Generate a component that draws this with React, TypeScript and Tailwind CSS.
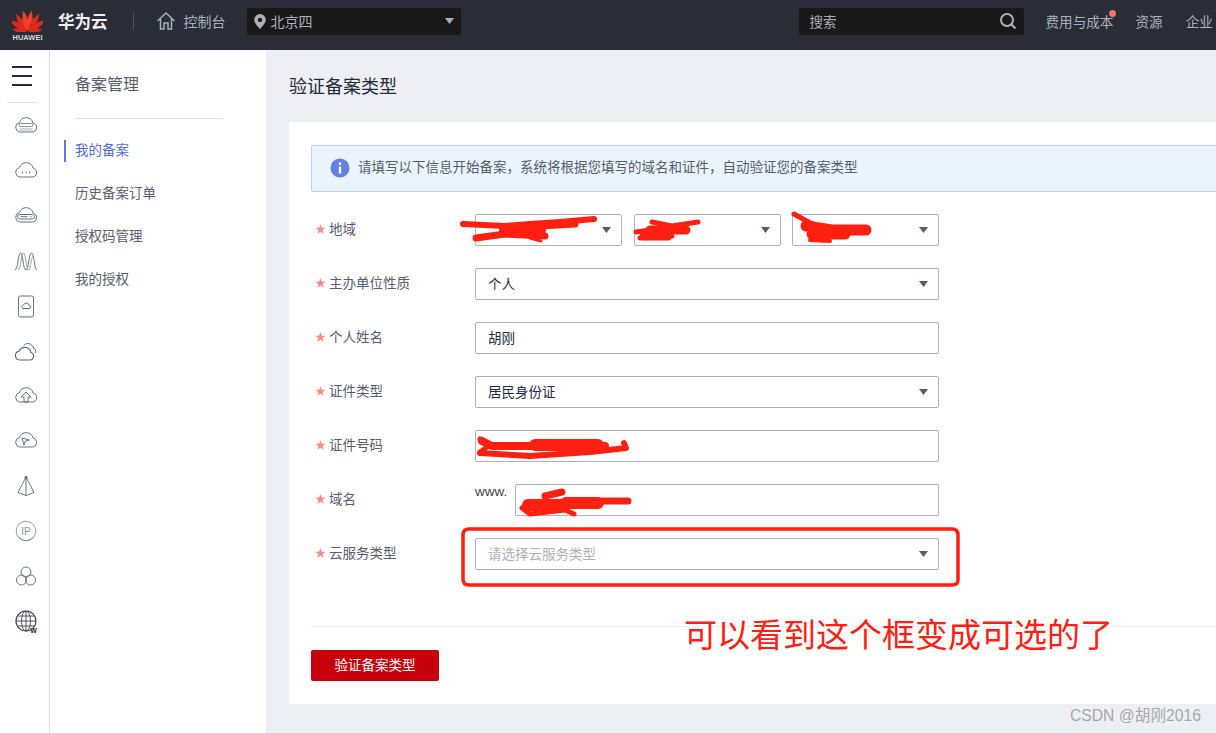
import React from 'react';

const CJK = '"Noto Sans CJK SC", "Liberation Sans", sans-serif';

const HuaweiLogo = () => (
  <svg width="31" height="23" viewBox="-16 -24 32 24" className="block">
    {[-80, -56, -33, -11, 11, 33, 56, 80].map((a, i) => (
      <path
        key={a}
        transform={`rotate(${a})`}
        d={i === 0 || i === 7 ? 'M0 -1C-2.800 -6 -3 -10 0 -16C3 -10 2.800 -6 0 -1Z' : 'M0 -1C-3.600 -8 -3.800 -14 0 -22.500C3.800 -14 3.600 -8 0 -1Z'}
        fill={i === 3 || i === 4 ? '#f0402a' : '#dd2a1c'}
      />
    ))}
  </svg>
);

const CaretDown = ({ color = '#575d6c' }: { color?: string }) => (
  <svg width="9" height="6" viewBox="0 0 9 6" className="block shrink-0">
    <path d="M0 0h9L4.500 6z" fill={color} />
  </svg>
);

const CLOUD = 'M5.500 18H18a4.500 4.500 0 0 0 1-8.900A7 7 0 0 0 5.500 8.600 4.800 4.800 0 0 0 5.500 18Z';

const RailIcon = ({ children }: { children: React.ReactNode }) => (
  <svg width="24" height="24" viewBox="0 0 24 24" fill="none" stroke="#5d6270" strokeWidth="0.9" className="block">
    {children}
  </svg>
);

const RAIL_ICONS: React.ReactNode[] = [
  <>
    <path d={CLOUD} />
    <rect x="5" y="9.500" width="14" height="3" rx="1.500" stroke="#7d818c" />
    <path d="M5.500 15.500h13" stroke="#d5d6da" strokeWidth="3" />
  </>,
  <>
    <path d={CLOUD} />
    <path d="M8 13.500h1M11.500 13.500h1M15 13.500h1" strokeWidth="1.400" />
  </>,
  <>
    <path d={CLOUD} />
    <rect x="3.500" y="10.500" width="17" height="4.500" rx="2.200" />
    <path d="M6.500 12.700h7M16 12.700h1.500" />
  </>,
  <>
    <path d="M1 21C4 21 4 4 6.500 4S9 21 12 21 14.500 4 17.500 4 20 21 23 21" />
    <path d="M4 21C7 21 7 4 9.500 4S12 21 14.500 21 17 4 20 8" stroke="#8d919b" />
  </>,
  <>
    <rect x="4.500" y="2" width="15" height="21" rx="1.800" />
    <path d="M9 14.500h6a1.500 1.500 0 0 0 .2-3 3 3 0 0 0-5.800-.3 1.700 1.700 0 0 0-.4 3.300Z" />
    <path d="M6 22.500h12" strokeWidth="1.400" stroke="#aeb1b8" />
  </>,
  <>
    <path d="M5.500 21H16a3.800 3.800 0 0 0 1-7.400 6.200 6.200 0 0 0-11.800-1.500A4.500 4.500 0 0 0 5.500 21Z" strokeWidth="1.100" />
    <path d="M9.500 6.500A5.500 5.500 0 0 1 14 4.500c3 0 5.500 2.500 5.500 5M19 8c2 1.300 3 3.500 2.500 6" />
  </>,
  <>
    <path d={CLOUD} />
    <path d="M12 8 7 13h3v5h4v-5h3Z" />
  </>,
  <>
    <path d={CLOUD} />
    <path d="M8 9 15.500 11l-4.500 1.500-1 3.500Z" />
  </>,
  <>
    <path d="M12 3 4 18.500l8 3 8-3ZM12 3v18.500" />
    <circle cx="12" cy="3.500" r="1.100" fill="#5d6270" />
  </>,
  <>
    <circle cx="12" cy="12" r="9.800" stroke="#8d919b" />
    <path d="M4.500 17.500A9 9 0 0 0 19.500 17.500" stroke="#8d919b" />
    <text x="12" y="15.800" textAnchor="middle" fontSize="10" fontFamily="Liberation Sans, sans-serif" fill="#8d919b" stroke="none">
      IP
    </text>
  </>,
  <>
    <circle cx="12" cy="8" r="5" />
    <circle cx="7.500" cy="16" r="5" />
    <circle cx="16.500" cy="16" r="5" />
  </>,
  <>
    <circle cx="12" cy="12" r="10" strokeWidth="1.200" stroke="#3d424e" />
    <ellipse cx="12" cy="12" rx="4.500" ry="10" stroke="#3d424e" />
    <path d="M12 2v20M2 12h20M4 7h16M4 17h16" stroke="#3d424e" />
    <text x="19.500" y="23.500" textAnchor="middle" fontSize="7" fontWeight="700" fontFamily="Liberation Sans, sans-serif" fill="#252b3a" stroke="none">
      W
    </text>
  </>,
];

const SUB_NAV = ['我的备案', '历史备案订单', '授权码管理', '我的授权'];

const Label = ({ text }: { text: string }) => (
  <div className="flex w-[164px] shrink-0 items-center pb-[4px] pl-[4px] text-[13.5px] text-[#575d6c]">
    <span className="mt-[1px] mr-[4px] w-[10px] text-[11px] leading-none text-[#f98b86]">★</span>
    {text}
  </div>
);

const Select = ({ value, placeholder, width }: { value?: string; placeholder?: string; width: string }) => (
  <div className={`flex h-8 items-center justify-between rounded-[2px] border border-[#adb0b8] pl-3 pr-[10px] text-[13.5px] ${width}`}>
    <span className={`pb-[2px] ${placeholder ? 'text-[#adb0b8]' : 'text-[#252b3a]'}`}>{value ?? placeholder}</span>
    <CaretDown />
  </div>
);

const TextInput = ({ value, width }: { value?: string; width: string }) => (
  <div className={`flex h-8 items-center rounded-[2px] border border-[#adb0b8] pb-[2px] pl-3 text-[13.5px] text-[#252b3a] ${width}`}>{value}</div>
);

const Row = ({ label, children }: { label: string; children: React.ReactNode }) => (
  <div className="flex h-8 items-center">
    <Label text={label} />
    {children}
  </div>
);

export default function App() {
  return (
    <div className="relative flex h-[733px] w-[1216px] flex-col overflow-hidden" style={{ fontFamily: CJK }}>
      {/* Top bar */}
      <header className="flex h-[50px] shrink-0 items-center bg-[#2a2d37] pb-[8px] text-[14px] text-[#a8b0bb]">
        <div className="ml-[12px] flex w-[31px] flex-col items-center pt-[8px]">
          <HuaweiLogo />
          <span className="mt-[1px] text-[7.5px] leading-[9px] font-bold text-[#d8dade]" style={{ fontFamily: '"Liberation Sans", sans-serif' }}>
            HUAWEI
          </span>
        </div>
        <span className="ml-[15px] text-[16.5px] font-bold text-[#eeeff1]">华为云</span>
        <div className="ml-[25px] h-[18px] w-px bg-[#4c505b]" />
        <svg width="20" height="20" viewBox="0 0 20 20" fill="none" stroke="#a8b0bb" strokeWidth="1.500" className="ml-[22px] block">
          <path d="M1.500 10 10 2l8.500 8M4.500 8v10h3.500v-6h4v6h3.500V8" />
        </svg>
        <span className="ml-[8px]">控制台</span>
        <div className="ml-[21px] flex h-[27px] w-[214px] items-center rounded-[2px] bg-[#191919] pr-[7px] pl-[7px]">
          <svg width="12" height="15" viewBox="0 0 12 15" className="block">
            <path fillRule="evenodd" d="M6 0a5.800 5.800 0 0 1 5.800 5.800C11.800 9.500 6 15 6 15S.2 9.500.2 5.800A5.800 5.800 0 0 1 6 0Zm0 3.700a2.200 2.200 0 1 0 0 4.400 2.200 2.200 0 0 0 0-4.400Z" fill="#a8b0bb" />
          </svg>
          <span className="ml-[5px] flex-1">北京四</span>
          <CaretDown color="#a8b0bb" />
        </div>
        <div className="ml-[338px] flex h-[27px] w-[225px] items-center justify-between rounded-[2px] bg-[#191919] pr-[7px] pl-[11px]">
          <span className="text-[13.5px]">搜索</span>
          <svg width="18" height="18" viewBox="0 0 18 18" fill="none" stroke="#a8b0bb" strokeWidth="2" className="block">
            <circle cx="8" cy="8" r="6" />
            <path d="m12.500 12.500 4 4" />
          </svg>
        </div>
        <div className="relative ml-[22px] text-[13.6px]">
          费用与成本
          <span className="absolute -top-[1px] -right-[3px] h-[7px] w-[7px] rounded-full bg-[#f66f6a]" />
        </div>
        <span className="ml-[22px] text-[13.6px]">资源</span>
        <span className="ml-[23px] text-[13.6px] whitespace-nowrap">企业</span>
      </header>

      <div className="flex min-h-0 flex-1">
        {/* Icon rail */}
        <aside className="flex w-[50px] shrink-0 flex-col border-r border-[#dfe1e6] bg-white">
          <div className="ml-[12px] mt-[16px] flex w-[20px] flex-col gap-[7px]">
            <div className="h-[2px] bg-[#252b3a]" />
            <div className="h-[2px] bg-[#252b3a]" />
            <div className="h-[2px] bg-[#252b3a]" />
          </div>
          <div className="ml-[7px] mt-[16px] h-px w-[31px] bg-[#dfe1e6]" />
          <div className="flex flex-col">
            {RAIL_ICONS.map((icon, i) => (
              <div key={i} className="flex h-[45px] items-center pl-[14px]">
                <RailIcon>{icon}</RailIcon>
              </div>
            ))}
          </div>
        </aside>

        {/* Secondary nav */}
        <nav className="w-[216px] shrink-0 bg-white shadow-[1px_0_3px_rgba(0,0,0,0.12)]">
          <div className="ml-[25px] mt-[21px] text-[16px] leading-[24px] text-[#575d6c]">备案管理</div>
          <div className="ml-[25px] mt-[23px] h-px w-[148px] bg-[#dfe1e6]" />
          <div className="mt-[21px] flex flex-col">
            {SUB_NAV.map((item, i) => (
              <div
                key={item}
                className={
                  i === 0
                    ? 'ml-[14px] mb-[21px] flex h-[22px] items-center border-l-2 border-[#5e7ce0] pb-[4px] pl-[9px] text-[13.5px] text-[#526ecc]'
                    : 'ml-[25px] mb-[21px] flex h-[22px] items-center pb-[4px] text-[13.5px] text-[#575d6c]'
                }
              >
                {item}
              </div>
            ))}
          </div>
        </nav>

        {/* Main */}
        <main className="min-w-0 flex-1 overflow-hidden bg-[#eeeff4] pl-[23px]">
          <h1 className="mt-[22px] text-[18px] leading-[27px] font-normal text-[#252b3a]">验证备案类型</h1>
          <section className="mt-[23px] h-[582px] bg-white pl-[22px] pt-[23px]">
            <div className="-mr-2 flex h-[47px] items-center rounded-[2px] border border-[#bed1f7] bg-[#e9f4fd] pl-[18px] text-[13.5px] text-[#575d6c]">
              <svg width="20" height="20" viewBox="0 0 20 20" className="mr-[8px] mb-[2px] block">
                <circle cx="10" cy="10" r="9.500" fill="#6480e0" />
                <rect x="8.800" y="8.500" width="2.400" height="7" fill="#fff" />
                <rect x="8.800" y="4.500" width="2.400" height="2.400" fill="#fff" />
              </svg>
              <span className="pb-[4px]">请填写以下信息开始备案，系统将根据您填写的域名和证件，自动验证您的备案类型</span>
            </div>

            <div className="mt-[22px] flex flex-col gap-[22px]">
              <Row label="地域">
                <div className="flex gap-3">
                  <Select width="w-[147px]" />
                  <Select width="w-[147px]" />
                  <Select width="w-[147px] -ml-px" />
                </div>
              </Row>
              <Row label="主办单位性质">
                <Select value="个人" width="w-[464px]" />
              </Row>
              <Row label="个人姓名">
                <TextInput value="胡刚" width="w-[464px]" />
              </Row>
              <Row label="证件类型">
                <Select value="居民身份证" width="w-[464px]" />
              </Row>
              <Row label="证件号码">
                <TextInput width="w-[464px]" />
              </Row>
              <Row label="域名">
                <div className="flex w-[464px] items-start">
                  <span className="mt-[1px] w-[40px] text-[13.5px] leading-[14px] text-[#3d424e]" style={{ fontFamily: '"Liberation Sans", sans-serif' }}>
                    www.
                  </span>
                  <TextInput width="w-[424px]" />
                </div>
              </Row>
              <Row label="云服务类型">
                <Select placeholder="请选择云服务类型" width="w-[464px]" />
              </Row>
            </div>

            <div className="-mr-2 mt-[56px] h-px bg-[#eeeff1]" />
            <button className="mt-[23px] flex h-[31px] w-[128px] items-center justify-center rounded-[2px] bg-[#c7000b] pb-[2px] text-[13.5px] text-white">
              验证备案类型
            </button>
          </section>
        </main>
      </div>

      {/* Hand-drawn redactions and markup on top of the screenshot */}
      <svg width="1216" height="733" viewBox="0 0 1216 733" fill="none" stroke="#ff2012" strokeLinecap="round" strokeLinejoin="round" className="pointer-events-none absolute inset-0 block">
        <path strokeWidth="6" d="M463 224 505 226 530 224 560 222 594 219" />
        <path strokeWidth="12" d="M505 230H540" />
        <path strokeWidth="7" d="M476 238 505 234 545 236M540 226 575 224" />
        <path strokeWidth="3" d="M530 238 541 241" />
        <path strokeWidth="5" d="M652 222 672 226 698 222M636 232 665 228" />
        <path strokeWidth="9" d="M650 230H686M644 236H668" />
        <path strokeWidth="5" d="M640 238 672 236" />
        <path strokeWidth="5" d="M794 214 812 224" />
        <path strokeWidth="11" d="M806 226 832 230 866 230M812 234H845" />
        <path strokeWidth="4" d="M810 240 830 241" />
        <path strokeWidth="8" d="M482 441 492 446H605" />
        <path strokeWidth="12" d="M535 445H598" />
        <path strokeWidth="6" d="M480 453 530 456 590 452 626 448 624 443" />
        <path strokeWidth="5" d="M480 439 490 445 480 452" />
        <path strokeWidth="12" d="M528 505H566M566 503H598" />
        <path strokeWidth="7" d="M598 501H628M545 496 562 492" />
        <path strokeWidth="5" d="M522 508 530 514 565 510 574 514" />
        <path strokeWidth="3.500" d="M469 529H952Q958 529 958 535V580Q958 585 952 585H469Q463 585 463 579V535Q463 529 469 529Z" />
      </svg>

      <span className="absolute top-[611px] left-[684px] text-[33px] leading-[44px] whitespace-nowrap text-[#ff2012]">可以看到这个框变成可选的了</span>
      <span className="absolute top-[706px] left-[1070px] text-[15.7px] leading-[20px] whitespace-nowrap text-[#a8a8a8]" style={{ fontFamily: '"Liberation Sans", "Noto Sans CJK SC", sans-serif' }}>
        CSDN @胡刚2016
      </span>
    </div>
  );
}
